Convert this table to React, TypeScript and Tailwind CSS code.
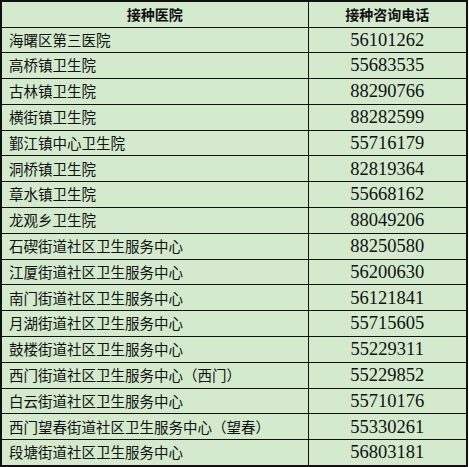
import React from 'react';

const rows: [string, string][] = [
  ['海曙区第三医院', '56101262'],
  ['高桥镇卫生院', '55683535'],
  ['古林镇卫生院', '88290766'],
  ['横街镇卫生院', '88282599'],
  ['鄞江镇中心卫生院', '55716179'],
  ['洞桥镇卫生院', '82819364'],
  ['章水镇卫生院', '55668162'],
  ['龙观乡卫生院', '88049206'],
  ['石碶街道社区卫生服务中心', '88250580'],
  ['江厦街道社区卫生服务中心', '56200630'],
  ['南门街道社区卫生服务中心', '56121841'],
  ['月湖街道社区卫生服务中心', '55715605'],
  ['鼓楼街道社区卫生服务中心', '55229311'],
  ['西门街道社区卫生服务中心（西门）', '55229852'],
  ['白云街道社区卫生服务中心', '55710176'],
  ['西门望春街道社区卫生服务中心（望春）', '55330261'],
  ['段塘街道社区卫生服务中心', '56803181'],
];

const cjk = { fontFamily: '"Noto Sans CJK SC", sans-serif' };
const serif = { fontFamily: '"Liberation Serif", "Noto Sans CJK SC", serif' };

export default function App() {
  return (
    <div className="w-[469px] h-[467px] bg-white">
      <table className="border-collapse bg-[#d3eacd] text-[#111] border-2 border-[#111]">
        <colgroup>
          <col className="w-[307px]" />
          <col className="w-[159px]" />
        </colgroup>
        <thead>
          <tr className="h-[26px]">
            <th className="border border-[#111] p-0 text-[14px] font-bold text-center leading-none" style={cjk}>接种医院</th>
            <th className="border border-[#111] p-0 text-[14px] font-bold text-center leading-none" style={cjk}>接种咨询电话</th>
          </tr>
        </thead>
        <tbody>
          {rows.map(([name, phone]) => (
            <tr key={name} className="h-[25.8px]">
              <td className="border border-[#111] py-0 pl-[7px] pr-0 text-[14.5px] leading-none whitespace-nowrap overflow-hidden" style={cjk}>{name}</td>
              <td className="border border-[#111] p-0 text-[18.5px] text-center leading-none" style={serif}>{phone}</td>
            </tr>
          ))}
        </tbody>
      </table>
    </div>
  );
}
